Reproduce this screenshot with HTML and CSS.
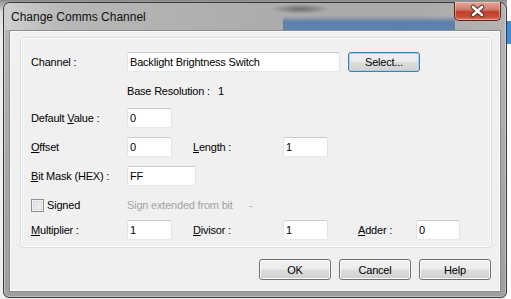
FILE: index.html
```html
<!DOCTYPE html>
<html lang="en">
<head>
    <meta charset="UTF-8">
    <title>Change Comms Channel</title>
    <link rel="stylesheet" href="styles.css">
</head>
<body>
    <div class="desktop">
        <div class="window">
            <div class="titlebar">
                <span class="title">Change Comms Channel</span>
                <button class="close">
                    <svg width="45" height="17" viewBox="0 0 45 17">
                        <path d="M18 4 L27 12 M27 4 L18 12" stroke="#3a1c16" stroke-width="4.6" stroke-linecap="round" fill="none" opacity="0.8"/>
                        <path d="M18 4 L27 12 M27 4 L18 12" stroke="#ffffff" stroke-width="2.6" stroke-linecap="round" fill="none"/>
                    </svg>
                </button>
            </div>

            <div class="client">
                <div class="group">
                    <div class="row">
                        <label class="lbl">Channel :</label>
                        <input type="text" class="txt wide" value="Backlight Brightness Switch" />
                        <button class="btn select">Select...</button>
                    </div>

                    <div class="row gap9">
                        <span class="lbl"></span>
                        <span class="base">Base Resolution :</span>
                        <span>1</span>
                    </div>

                    <div class="row gap7">
                        <label class="lbl">Default <u>V</u>alue :</label>
                        <input type="text" class="txt" value="0" />
                    </div>

                    <div class="row gap9">
                        <label class="lbl"><u>O</u>ffset</label>
                        <input type="text" class="txt" value="0" />
                        <label class="lbl2"><u>L</u>ength :</label>
                        <input type="text" class="txt" value="1" />
                    </div>

                    <div class="row gap9">
                        <label class="lbl"><u>B</u>it Mask (HEX) :</label>
                        <input type="text" class="txt mask" value="FF" />
                    </div>

                    <div class="row signed">
                        <label class="lbl"><span class="check"></span>Signed</label>
                        <span class="muted ext">Sign extended from bit</span>
                        <span class="muted">-</span>
                    </div>

                    <div class="row gap7">
                        <label class="lbl"><u>M</u>ultiplier :</label>
                        <input type="text" class="txt" value="1" />
                        <label class="lbl2"><u>D</u>ivisor :</label>
                        <input type="text" class="txt" value="1" />
                        <label class="lbl3"><u>A</u>dder :</label>
                        <input type="text" class="txt adder" value="0" />
                    </div>
                </div>

                <div class="buttons">
                    <button class="btn">OK</button>
                    <button class="btn">Cancel</button>
                    <button class="btn">Help</button>
                </div>
            </div>
        </div>

        <div class="behind">
            <div class="blue"></div>
        </div>
    </div>
</body>
</html>
```

FILE: styles.css
```css
* {
    box-sizing: border-box;
}

body {
    margin        : 0;
    background    : #eeeeee;
    font-family   : "Liberation Sans", Arial, sans-serif;
    font-size     : 11px;
    letter-spacing: -0.2px;
    color         : #000000;
}

.desktop {
    display     : flex;
    width       : 511px;
    height      : 299px;
    padding-left: 3px;
    overflow    : hidden;
    background  : linear-gradient(#8a8a8a 0, #dcdcdc 12px, #efefef 40px);
}

/* window frame */
.window {
    display       : flex;
    flex-direction: column;
    width         : 504px;
    height        : 296px;
    margin-top    : 2px;
    padding       : 0 5px 5px 5px;
    border        : 1px solid #3a3a3a;
    border-radius : 7px 7px 6px 6px;
    background    : linear-gradient(#b9b9b9, #a6a6a6 60%, #9f9f9f);
    box-shadow    : inset 0 0 0 1px rgba(255, 255, 255, 0.35);
}

.titlebar {
    display        : flex;
    justify-content: space-between;
    align-items    : flex-start;
    height         : 27px;
    margin         : 0 -4px 0 -5px;
    padding        : 0 4px 0 7px;
    border-radius  : 6px 6px 0 0;
    background     :
        radial-gradient(ellipse 30px 5px at 296px 6px, rgba(70, 70, 70, 0.6), rgba(70, 70, 70, 0)),
        linear-gradient(rgba(80, 120, 170, 0) 13px, rgba(80, 120, 170, 0.85) 19px, rgba(85, 125, 175, 0.9)) 279px 0 / 172px 27px no-repeat,
        linear-gradient(to right, #cfcfcf 0, #b7b7b7 60px, #adadad 250px, #a9a9a9 400px, #b4b4b4 100%);
}

.title {
    padding-top   : 6px;
    font-size     : 12px;
    line-height   : 16px;
    letter-spacing: 0;
    color         : #111111;
}

.close {
    display        : flex;
    align-items    : center;
    justify-content: center;
    width          : 47px;
    height         : 19px;
    margin-top     : -1px;
    padding        : 0;
    border         : 1px solid #5a2418;
    border-top     : none;
    border-radius  : 0 0 5px 5px;
    background     : linear-gradient(#dfa79a 0, #d47d6d 40%, #c2402c 55%, #c64c37 80%, #d7765f 100%);
    box-shadow     : inset 0 0 0 1px rgba(255, 220, 210, 0.45);
}

/* client area */
.client {
    flex          : 1;
    display       : flex;
    flex-direction: column;
    padding       : 6px 8px 0 10px;
    border        : 1px solid #8c8c8c;
    background    : #f0f0f0;
    box-shadow    : inset 0 0 0 1px #fafafa;
}

.group {
    height       : 211px;
    padding      : 14px 0 0 10px;
    border       : 1px solid #d5dfe5;
    border-radius: 3px;
    box-shadow   : inset 0 0 0 1px #ffffff;
}

.row {
    display    : flex;
    align-items: center;
    height     : 20px;
}

.gap7 {
    margin-top: 7px;
}

.gap9 {
    margin-top: 9px;
}

.signed {
    height    : 16px;
    margin-top: 11px;
}

.lbl {
    display    : block;
    width      : 96px;
    flex-shrink: 0;
    white-space: nowrap;
}

.lbl2 {
    width      : 90px;
    margin-left: 21px;
    flex-shrink: 0;
}

.lbl3 {
    width      : 58px;
    margin-left: 30px;
    flex-shrink: 0;
}

.base {
    width: 91px;
}

.muted {
    color: #a3a3a3;
}

.ext {
    width: 122px;
}

.check {
    display       : inline-block;
    width         : 13px;
    height        : 13px;
    margin-right  : 3px;
    vertical-align: -3px;
    border        : 1px solid #8e8f8f;
    background    : linear-gradient(135deg, #dcdcdc, #f6f6f6);
    box-shadow    : inset 0 0 0 1px #f4f4f4, inset 0 0 0 2px #d8d8d8;
}

/* text boxes */
.txt {
    width         : 45px;
    height        : 20px;
    margin        : 0;
    padding       : 0 2px;
    border        : 1px solid;
    border-color  : #c9ccd1 #dfe2e6 #e6e9ec #e2e4e8;
    border-radius : 2px;
    background    : #ffffff;
    font-family   : inherit;
    font-size     : 11px;
    letter-spacing: -0.2px;
    color         : #000000;
    outline       : none;
}

.wide {
    width: 213px;
}

.mask {
    width: 69px;
}

.adder {
    width: 44px;
}

/* buttons */
.btn {
    width         : 72px;
    height        : 21px;
    padding       : 0;
    border        : 1px solid #707070;
    border-radius : 3px;
    background    : linear-gradient(#f2f2f2 0, #ebebeb 48%, #dddddd 52%, #cfcfcf 100%);
    box-shadow    : inset 0 0 0 1px #fbfbfb;
    font-family   : inherit;
    font-size     : 11px;
    letter-spacing: -0.2px;
    color         : #000000;
}

.select {
    height      : 20px;
    margin-left : 8px;
    border-color: #3c7fb1;
    background  : linear-gradient(#f0f0f0 0, #e9e9e9 48%, #dcdcdc 52%, #d2d2d2 100%);
    box-shadow  : inset 0 0 0 1px #9fd5f2;
}

.buttons {
    display        : flex;
    justify-content: flex-end;
    gap            : 8px;
    margin-top     : 11px;
    padding-right  : 1px;
}

/* window behind the dialog */
.behind {
    flex      : 1;
    background: #ffffff;
}

.blue {
    height    : 23px;
    margin-top: 21px;
    background: #3d8ddb;
}
```
